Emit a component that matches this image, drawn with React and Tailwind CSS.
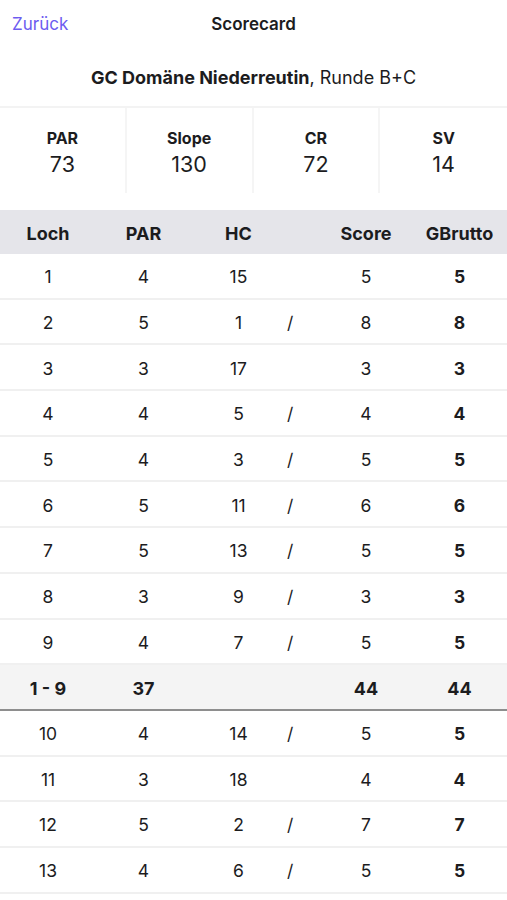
import React from "react";

const rows = [
  ["1", "4", "15", "", "5", "5"],
  ["2", "5", "1", "/", "8", "8"],
  ["3", "3", "17", "", "3", "3"],
  ["4", "4", "5", "/", "4", "4"],
  ["5", "4", "3", "/", "5", "5"],
  ["6", "5", "11", "/", "6", "6"],
  ["7", "5", "13", "/", "5", "5"],
  ["8", "3", "9", "/", "3", "3"],
  ["9", "4", "7", "/", "5", "5"],
  ["1 - 9", "37", "", "", "44", "44", true],
  ["10", "4", "14", "/", "5", "5"],
  ["11", "3", "18", "", "4", "4"],
  ["12", "5", "2", "/", "7", "7"],
  ["13", "4", "6", "/", "5", "5"],
];

const stats = [
  ["PAR", "73"],
  ["Slope", "130"],
  ["CR", "72"],
  ["SV", "14"],
];

const grid = "grid grid-cols-[96px_95px_95px_34px_92px_95px] items-center";

export default function App() {
  return (
    <div className="w-[507px] bg-white text-[#1c1c1e] font-['Inter',sans-serif]">
      <div className="grid grid-cols-[1fr_auto_1fr] items-center h-[46px] pt-[2px] px-3">
        <span className="text-[17px] text-[#6d5cf0] leading-none">Zurück</span>
        <span className="text-[17px] font-semibold leading-none">Scorecard</span>
        <span />
      </div>
      <div className="h-[60px] flex items-center justify-center pt-[2px] text-[18px]">
        <span className="font-bold">GC Domäne Niederreutin</span>
        <span>, Runde B+C</span>
      </div>
      <div className="border-t-2 border-[#f3f3f3] grid grid-cols-4 h-[87px]">
        {stats.map(([l, v], i) => (
          <div
            key={l}
            className={`flex flex-col items-center justify-center gap-[2px] pt-[4px] ${i < 3 ? "border-r-2 border-[#f5f5f5]" : ""}`}
          >
            <span className="text-[16px] font-bold leading-[20px]">{l}</span>
            <span className="text-[21.5px] leading-[28px]">{v}</span>
          </div>
        ))}
      </div>
      <div className={`${grid} mt-[17px] h-[44px] pt-[2px] bg-[#e5e5ea] text-[18px] font-bold`}>
        <span className="text-center">Loch</span>
        <span className="text-center">PAR</span>
        <span className="text-center">HC</span>
        <span />
        <span className="text-center">Score</span>
        <span className="text-center">GBrutto</span>
      </div>
      {rows.map((r, i) => {
        const sum = r[6];
        return (
          <div
            key={i}
            className={`${grid} h-[45.7px] pt-[3px] ${
              sum
                ? "bg-[#f4f4f4] text-[18px] font-bold border-b-2 border-[#8e8e8e]"
                : "text-[17.5px] border-b-2 border-[#f0f0f0]"
            }`}
          >
            <span className="text-center">{r[0]}</span>
            <span className="text-center">{r[1]}</span>
            <span className="text-center">{r[2]}</span>
            <span className="pl-[1px]">{r[3]}</span>
            <span className="text-center">{r[4]}</span>
            <span className="text-center font-bold">{r[5]}</span>
          </div>
        );
      })}
    </div>
  );
}
